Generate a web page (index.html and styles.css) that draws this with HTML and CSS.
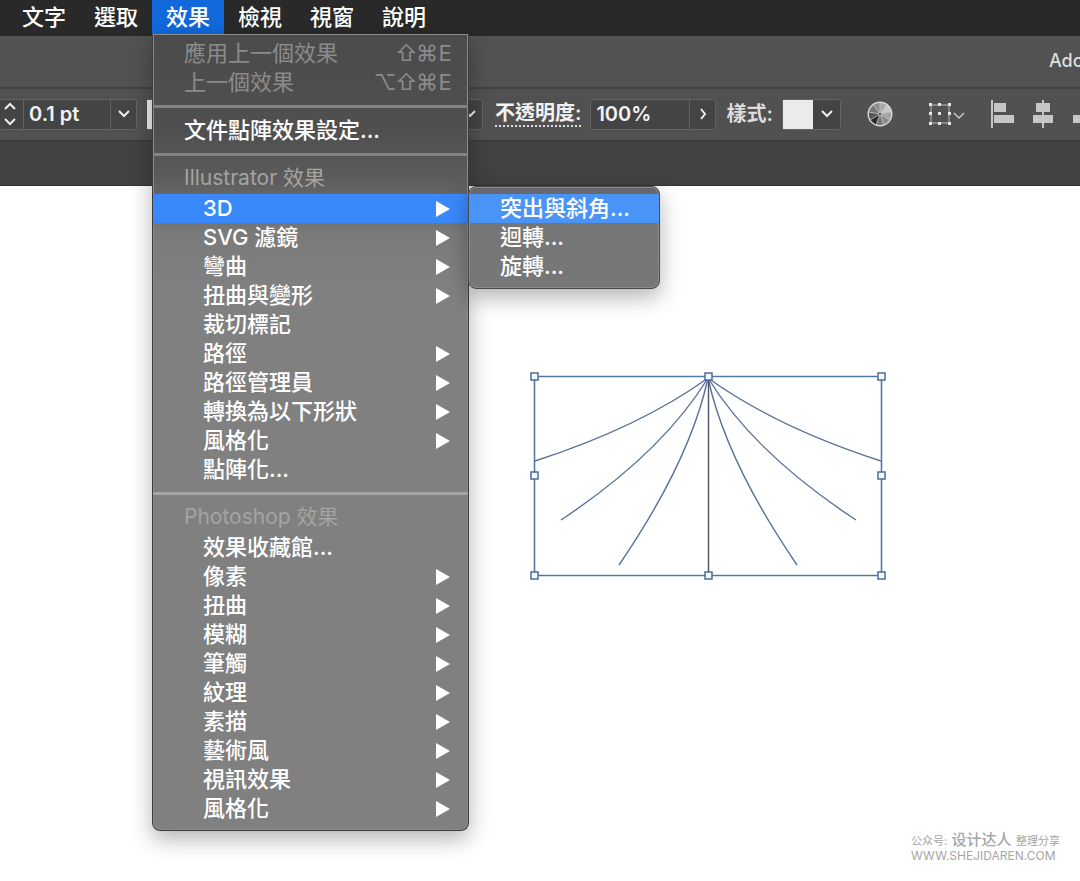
FILE: index.html
```html
<!DOCTYPE html>
<html lang="zh-Hant">
<head>
<meta charset="utf-8">
<meta name="viewport" content="width=device-width, initial-scale=1">
<title>效果</title>
<link rel="stylesheet" href="styles.css">
</head>
<body>
<nav class="menubar">
  <button class="menubar-item">文字</button>
  <button class="menubar-item">選取</button>
  <div class="menubar-group">
    <button class="menubar-item is-open">效果</button>
    <div class="menu">
      <button class="row dim" disabled><span>應用上一個效果</span><span class="keys"><span>⇧</span><span>⌘</span><span>E</span></span></button>
      <button class="row dim" disabled><span>上一個效果</span><span class="keys"><span>⌥</span><span>⇧</span><span>⌘</span><span>E</span></span></button>
      <hr class="sep">
      <button class="row">文件點陣效果設定...</button>
      <hr class="sep">
      <div class="caption">Illustrator 效果</div>
      <div class="branch">
        <button class="row sub more is-active">3D</button>
        <div class="menu submenu">
          <button class="row is-active">突出與斜角...</button>
          <button class="row">迴轉...</button>
          <button class="row">旋轉...</button>
        </div>
      </div>
      <button class="row sub more">SVG 濾鏡</button>
      <button class="row sub more">彎曲</button>
      <button class="row sub more">扭曲與變形</button>
      <button class="row sub">裁切標記</button>
      <button class="row sub more">路徑</button>
      <button class="row sub more">路徑管理員</button>
      <button class="row sub more">轉換為以下形狀</button>
      <button class="row sub more">風格化</button>
      <button class="row sub">點陣化...</button>
      <hr class="sep">
      <div class="caption">Photoshop 效果</div>
      <button class="row sub">效果收藏館...</button>
      <button class="row sub more">像素</button>
      <button class="row sub more">扭曲</button>
      <button class="row sub more">模糊</button>
      <button class="row sub more">筆觸</button>
      <button class="row sub more">紋理</button>
      <button class="row sub more">素描</button>
      <button class="row sub more">藝術風</button>
      <button class="row sub more">視訊效果</button>
      <button class="row sub more">風格化</button>
    </div>
  </div>
  <button class="menubar-item">檢視</button>
  <button class="menubar-item">視窗</button>
  <button class="menubar-item">說明</button>
</nav>

<header class="titlebar"><span class="app-name">Ado</span></header>

<section class="controls">
  <div class="field weight">
    <button class="stepper" aria-label="增減">
      <svg width="14" height="24" viewBox="0 0 14 24"><path d="M2 7l5-5 5 5M2 17l5 5 5-5"/></svg>
    </button>
    <input class="box" type="text" value="0.1 pt" aria-label="pt">
    <button class="arrow" aria-label="選擇"><svg width="14" height="10" viewBox="0 0 14 10"><path d="M2 2l5 5 5-5"/></svg></button>
  </div>
  <div class="field profile">
    <span class="profile-line"></span>
    <button class="arrow" aria-label="選擇"><svg width="14" height="10" viewBox="0 0 14 10"><path d="M2 2l5 5 5-5"/></svg></button>
  </div>
  <label class="label dotted" for="opacity">不透明度:</label>
  <div class="field opacity">
    <input class="box" id="opacity" type="text" value="100%">
    <button class="arrow" aria-label="更多"><svg width="10" height="14" viewBox="0 0 10 14"><path d="M3 2l4 5-4 5"/></svg></button>
  </div>
  <label class="label style-label" for="style">樣式:</label>
  <button class="field style-pick" id="style">
    <span class="swatch"></span>
    <svg width="14" height="10" viewBox="0 0 14 10"><path d="M2 2l5 5 5-5"/></svg>
  </button>
  <button class="tool wheel" aria-label="重新上色">
    <svg width="26" height="26" viewBox="-13 -13 26 26">
      <g stroke="none">
        <path fill="#a8a8a8" d="M0 0V-12A12 12 0 0 1 7-10z"/>
        <path fill="#c8c8c8" d="M0 0L7-10A12 12 0 0 1 12-2z"/>
        <path fill="#a2a2a2" d="M0 0L12-2A12 12 0 0 1 10 6z"/>
        <path fill="#8a8a8a" d="M0 0L10 6A12 12 0 0 1 4 11z"/>
        <path fill="#777" d="M0 0L4 11A12 12 0 0 1-4 11z"/>
        <path fill="#292929" d="M0 0L-4 11A12 12 0 0 1-10 6z"/>
        <path fill="#555" d="M0 0L-10 6A12 12 0 0 1-12-2z"/>
        <path fill="#777" d="M0 0L-12-2A12 12 0 0 1-7-10z"/>
        <path fill="#8e8e8e" d="M0 0L-7-10A12 12 0 0 1 0-12z"/>
      </g>
      <path stroke="#c9c9c9" stroke-width=".8" d="M0 0V-12M0 0L7-10M0 0L12-2M0 0L10 6M0 0L4 11M0 0L-4 11M0 0L-10 6M0 0L-12-2M0 0L-7-10"/>
      <circle r="11.8" stroke="#d6d6d6" stroke-width="1.4"/>
      <circle r="1.8" fill="#555" stroke="#ccc" stroke-width=".8"/>
    </svg>
  </button>
  <button class="tool transform" aria-label="變形">
    <svg width="40" height="24" viewBox="0 0 40 24">
      <path stroke="#bdbdbd" stroke-width="1" d="M3 3H21V21H3z"/>
      <path stroke="none" fill="#e6e6e6" d="M1 1h3v3H1zM10 1h3v3h-3zM20 1h3v3h-3zM1 10h3v3H1zM10 10h3v3h-3zM20 10h3v3h-3zM1 20h3v3H1zM10 20h3v3h-3zM20 20h3v3h-3z"/>
      <path stroke="#c8c8c8" stroke-width="1.5" d="M26 11l5 5 5-5"/>
    </svg>
  </button>
  <button class="tool align" aria-label="靠左對齊">
    <svg width="24" height="28" viewBox="0 0 24 28"><path stroke="none" fill="#c6c6c6" d="M0 0h2v28H0zM3 3h12v9H3zM3 15h20v8H3z"/></svg>
  </button>
  <button class="tool align" aria-label="置中對齊">
    <svg width="24" height="28" viewBox="0 0 24 28"><path stroke="none" fill="#c6c6c6" d="M10 0h2v28h-2zM4 3h14v9H4zM1 15h20v8H1z"/></svg>
  </button>
  <button class="tool align" aria-label="靠右對齊">
    <svg width="24" height="28" viewBox="0 0 24 28"><path stroke="none" fill="#c6c6c6" d="M21 0h2v28h-2zM9 3h11v9H9zM0 15h19v8H0z"/></svg>
  </button>
</section>

<div class="tabs"></div>

<main class="canvas">
  <svg class="art" width="360" height="212" viewBox="528 370 360 212">
    <g class="strokes">
      <path d="M708 378Q640 427 535 461"/>
      <path d="M708 378Q662 453 561 520"/>
      <path d="M708 378Q690 461 619 565"/>
      <path d="M708 378Q726 461 797 565"/>
      <path d="M708 378Q754 453 856 520"/>
      <path d="M708 378Q776 427 881 461"/>
    </g>
    <path class="spine" d="M708.500 376V575"/>
    <path class="bounds" d="M534.500 376.500H881.500V575.500H534.500z"/>
    <g class="handles">
      <rect x="531" y="373" width="7" height="7"/>
      <rect x="705" y="373" width="7" height="7"/>
      <rect x="878" y="373" width="7" height="7"/>
      <rect x="531" y="472" width="7" height="7"/>
      <rect x="878" y="472" width="7" height="7"/>
      <rect x="531" y="572" width="7" height="7"/>
      <rect x="705" y="572" width="7" height="7"/>
      <rect x="878" y="572" width="7" height="7"/>
    </g>
  </svg>
  <footer class="credit" lang="zh-Hans">
    <div class="credit-line"><span>公众号:</span><strong>设计达人</strong><span>整理分享</span></div>
    <div class="credit-url">WWW.SHEJIDAREN.COM</div>
  </footer>
</main>
</body>
</html>
```

FILE: styles.css
```css
* { box-sizing: border-box; }

body {
  margin: 0;
  min-height: 100vh;
  display: flex;
  flex-direction: column;
  overflow: hidden;
  background: #fff;
  color: #fff;
  font-family: Inter, "Noto Sans CJK TC", sans-serif;
  font-size: 22px;
}

button, input {
  margin: 0;
  padding: 0;
  border: 0;
  background: none;
  color: inherit;
  font: inherit;
}

/* menu bar */
.menubar {
  display: flex;
  align-items: flex-start;
  height: 36px;
  padding-left: 8px;
  background: #292929;
}
.menubar-group { position: relative; z-index: 2; }
.menubar-item {
  display: block;
  width: 72px;
  height: 34px;
  line-height: 34px;
  font-weight: 500;
}
.menubar-item.is-open { background: #1169dc; }

/* drop-down menus */
.menu {
  position: absolute;
  top: 100%;
  left: 0;
  width: 317px;
  padding: 5px 0 7px;
  border: 1px solid #3c3c3c;
  border-top: 0;
  border-radius: 0 0 8px 8px;
  background: linear-gradient(#4b4b4b 0, #505050 100px, #5a5a5a 140px, #7a7a7a 200px, #808080 250px, #808080 100%);
  box-shadow: inset 0 0 0 1px #8a8a8a, 0 8px 22px rgba(0, 0, 0, .3);
}
.row {
  display: flex;
  align-items: center;
  justify-content: space-between;
  width: 100%;
  height: 29px;
  padding: 0 15px 0 31px;
  font-weight: 500;
  line-height: 29px;
  text-align: left;
  white-space: nowrap;
}
.row.sub { padding: 0 18px 0 50px; }
.row.dim { color: #8b8b8b; font-weight: 400; }
.row.is-active { background: #3a89fc; }
.more::after {
  content: "";
  border-left: 14px solid #fff;
  border-top: 8px solid transparent;
  border-bottom: 8px solid transparent;
}
.keys { display: flex; font-family: Inter, "DejaVu Sans", sans-serif; }
.keys span { width: 21px; text-align: center; }
.keys span:last-child { width: 16px; }
.caption {
  height: 30px;
  padding-left: 31px;
  color: #a6a3a1;
  font-size: 21px;
  line-height: 28px;
}
.sep {
  height: 3px;
  margin: 8px 0;
  border: 0;
  background: #838383;
}
.caption ~ .sep { background: #a5a5a5; }
.branch { position: relative; }
.submenu {
  top: -8px;
  left: 100%;
  width: 192px;
  padding: 7px 0;
  border: 1px solid #4a4a4a;
  border-radius: 8px;
  background: linear-gradient(#65656d, #767676 40px, #777);
}
.submenu .row { padding-left: 31px; }
.submenu .is-active { background: #4a94f8; }

/* title bar and control bar */
.titlebar {
  display: flex;
  justify-content: flex-end;
  height: 51px;
  overflow: hidden;
  background: #525252;
}
.app-name {
  width: 31px;
  color: #dedede;
  font-size: 18px;
  font-weight: 500;
  line-height: 50px;
}
.controls {
  display: flex;
  align-items: center;
  height: 54px;
  padding-bottom: 1px;
  overflow: hidden;
  border-top: 2px solid #414141;
  border-bottom: 1px solid #3a3a3a;
  background: #515151;
  color: #f2f2f2;
  font-size: 20px;
  font-weight: 600;
}
.controls > * { flex: none; }
.controls svg {
  display: block;
  fill: none;
  stroke: #eee;
  stroke-width: 2;
}
.field {
  display: flex;
  align-items: center;
  height: 31px;
  border: 1px solid #646464;
  border-radius: 3px;
  background: #444;
}
.field .box {
  flex: 1;
  min-width: 0;
  height: 29px;
  padding: 0 5px;
}
.arrow {
  display: grid;
  place-items: center;
  width: 26px;
  height: 29px;
  border-left: 1px solid #646464;
}
.weight { width: 137px; border-left: 0; }
.stepper {
  display: grid;
  place-items: center;
  width: 24px;
  height: 29px;
  padding-right: 4px;
  border-right: 1px solid #646464;
}
.profile { width: 336px; margin-left: 10px; border-left: 0; }
.profile-line { flex: 1; height: 29px; background: #eee; }
.label { margin-left: 12px; line-height: 24px; }
.dotted { border-bottom: 2px dotted #ddd; }
.opacity { width: 126px; margin-left: 9px; }
.style-label { margin-left: 10px; color: #dcdcdc; }
.style-pick { gap: 7px; width: 59px; margin-left: 9px; }
.swatch { width: 30px; height: 29px; background: #ebebeb; }
.tool { display: block; }
.wheel { margin-left: 26px; }
.transform { margin: 0 23px 0 35px; }
.align { margin-right: 17px; }
.tabs {
  height: 45px;
  border-bottom: 1px solid #333;
  background: #424242;
}

/* artboard */
.canvas { position: relative; flex: 1; }
.art {
  position: absolute;
  top: 184px;
  left: 528px;
  fill: none;
}
.strokes { stroke: #5a7299; stroke-width: 1.4; }
.spine { stroke: #46526b; stroke-width: 1.4; }
.bounds { stroke: #5378aa; stroke-width: 1.6; }
.handles { fill: #f4faff; stroke: #4c6c98; stroke-width: 1.5; }
.credit {
  position: absolute;
  right: 20px;
  bottom: 19px;
  width: 149px;
  color: #a6a6a6;
  font-family: Inter, "Noto Sans CJK SC", sans-serif;
  font-size: 11px;
  line-height: 12px;
}
.credit-line {
  display: flex;
  align-items: baseline;
  justify-content: space-between;
  line-height: 18px;
}
.credit-line strong { font-size: 15px; font-weight: 500; }
.credit-url { font-size: 12px; }
```
